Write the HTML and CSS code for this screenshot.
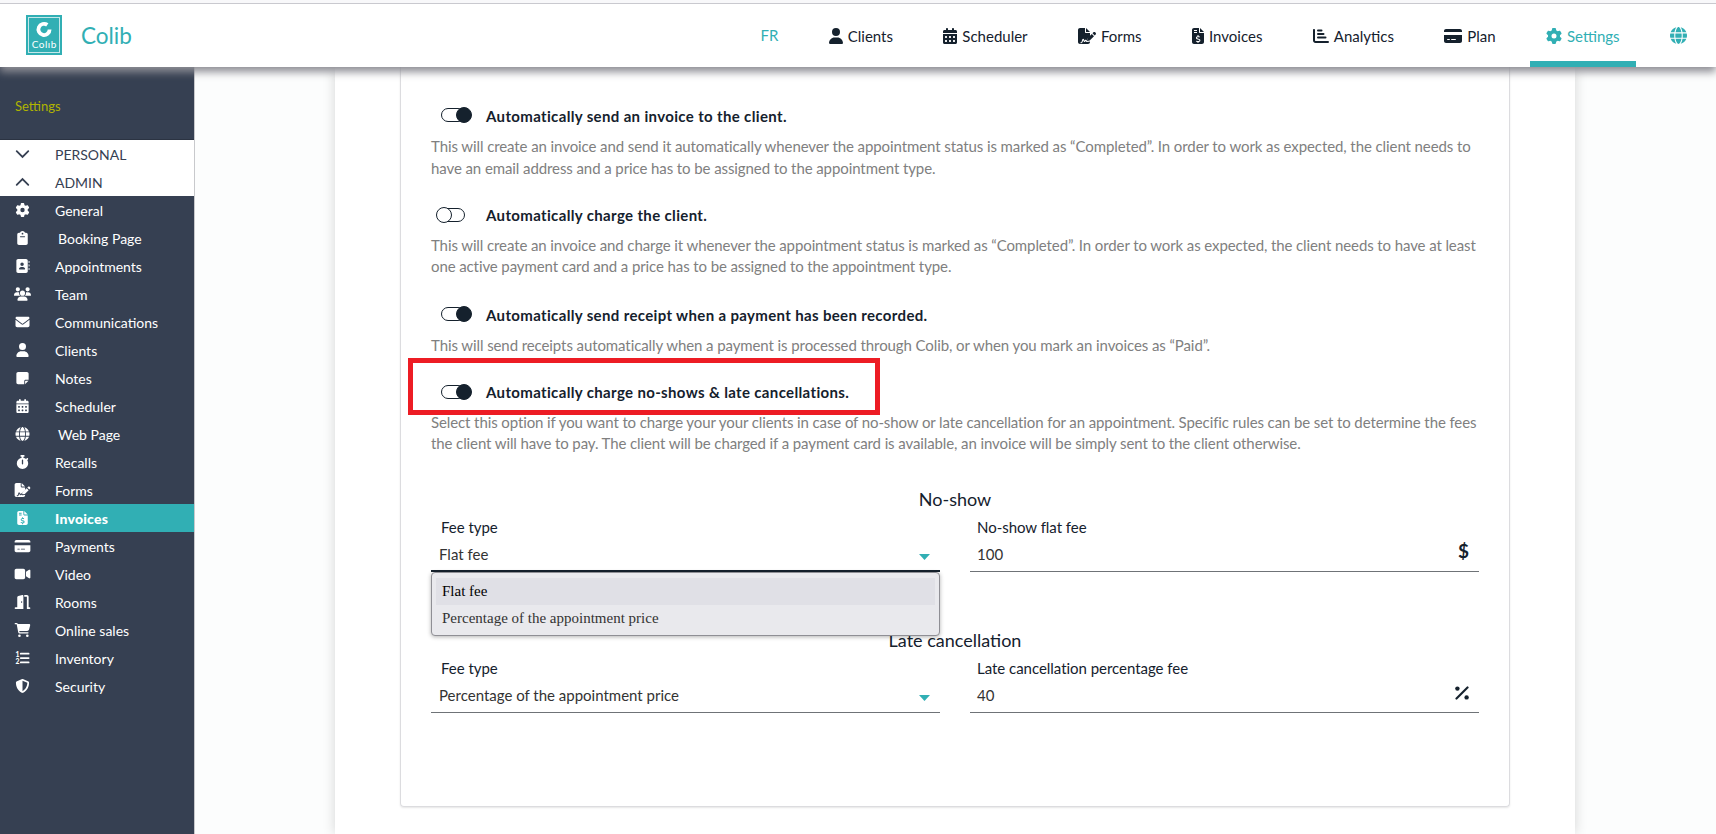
FILE: index.html
```html
<!DOCTYPE html>
<html lang="en">
  <head>
    <meta charset="UTF-8" />
    <meta name="viewport" content="width=device-width, initial-scale=1.0" />
    <title>Colib - Invoice settings</title>
    <link rel="stylesheet" href="styles.css">
  </head>
  <body>
    <!-- Icon sprite -->
    <svg class="sprite" xmlns="http://www.w3.org/2000/svg">
      <symbol id="i-user" viewBox="0 0 448 512"><path d="M224 256A128 128 0 1 0 224 0a128 128 0 1 0 0 256zm-45.7 48C79.8 304 0 383.8 0 482.3C0 498.7 13.3 512 29.7 512H418.3c16.4 0 29.7-13.3 29.7-29.7C448 383.8 368.2 304 269.7 304H178.3z"/></symbol>
      <symbol id="i-gear" viewBox="0 0 512 512"><path d="M495.9 166.6c3.2 8.7 .5 18.4-6.4 24.6l-43.3 39.4c1.1 8.3 1.7 16.8 1.7 25.4s-.6 17.1-1.7 25.4l43.3 39.4c6.9 6.2 9.6 15.9 6.4 24.6c-4.4 11.9-9.7 23.3-15.8 34.3l-4.7 8.1c-6.6 11-14 21.4-22.1 31.2c-5.9 7.2-15.7 9.6-24.5 6.8l-55.7-17.7c-13.4 10.3-28.2 18.9-44 25.4l-12.5 57.1c-2 9.1-9 16.3-18.2 17.8c-13.8 2.3-28 3.5-42.5 3.5s-28.7-1.2-42.5-3.5c-9.2-1.5-16.2-8.7-18.2-17.8l-12.5-57.1c-15.8-6.5-30.6-15.1-44-25.4L83.1 425.9c-8.8 2.8-18.6 .3-24.5-6.8c-8.1-9.8-15.5-20.2-22.1-31.2l-4.7-8.1c-6.1-11-11.4-22.4-15.8-34.3c-3.2-8.7-.5-18.4 6.4-24.6l43.3-39.4C64.6 273.1 64 264.6 64 256s.6-17.1 1.7-25.4L22.4 191.2c-6.9-6.2-9.6-15.9-6.4-24.6c4.4-11.9 9.7-23.3 15.8-34.3l4.7-8.1c6.6-11 14-21.4 22.1-31.2c5.9-7.2 15.7-9.6 24.5-6.8l55.7 17.7c13.4-10.3 28.2-18.9 44-25.4l12.5-57.1c2-9.1 9-16.3 18.2-17.8C227.3 1.2 241.5 0 256 0s28.7 1.2 42.5 3.5c9.2 1.5 16.2 8.7 18.2 17.8l12.5 57.1c15.8 6.5 30.6 15.1 44 25.4l55.7-17.7c8.8-2.8 18.6-.3 24.5 6.8c8.1 9.8 15.5 20.2 22.1 31.2l4.7 8.1c6.1 11 11.4 22.4 15.8 34.3zM256 336a80 80 0 1 0 0-160 80 80 0 1 0 0 160z"/></symbol>
      <symbol id="i-calendar" viewBox="0 0 448 512"><path d="M128 0c17.7 0 32 14.3 32 32V64H288V32c0-17.7 14.3-32 32-32s32 14.3 32 32V64h48c26.5 0 48 21.5 48 48v48H0V112C0 85.5 21.5 64 48 64H96V32c0-17.7 14.3-32 32-32zM0 192H448V464c0 26.5-21.5 48-48 48H48c-26.5 0-48-21.5-48-48V192zm64 80v32c0 8.8 7.2 16 16 16h32c8.8 0 16-7.2 16-16V272c0-8.8-7.2-16-16-16H80c-8.8 0-16 7.2-16 16zm128 0v32c0 8.8 7.2 16 16 16h32c8.8 0 16-7.2 16-16V272c0-8.8-7.2-16-16-16H208c-8.8 0-16 7.2-16 16zm144-16c-8.8 0-16 7.2-16 16v32c0 8.8 7.2 16 16 16h32c8.8 0 16-7.2 16-16V272c0-8.8-7.2-16-16-16H336zM64 400v32c0 8.8 7.2 16 16 16h32c8.8 0 16-7.2 16-16V400c0-8.8-7.2-16-16-16H80c-8.8 0-16 7.2-16 16zm144-16c-8.8 0-16 7.2-16 16v32c0 8.8 7.2 16 16 16h32c8.8 0 16-7.2 16-16V400c0-8.8-7.2-16-16-16H208zm112 16v32c0 8.8 7.2 16 16 16h32c8.8 0 16-7.2 16-16V400c0-8.8-7.2-16-16-16H336c-8.8 0-16 7.2-16 16z"/></symbol>
      <symbol id="i-globe" viewBox="0 0 512 512"><path d="M352 256c0 22.2-1.2 43.6-3.3 64H163.3c-2.2-20.4-3.3-41.8-3.3-64s1.2-43.6 3.3-64H348.7c2.2 20.4 3.3 41.8 3.3 64zm28.8-64H503.9c5.3 20.5 8.1 41.9 8.1 64s-2.8 43.5-8.1 64H380.8c2.1-20.6 3.2-42 3.2-64s-1.1-43.4-3.2-64zm112.6-32H376.7c-10-63.9-29.8-117.4-55.3-151.6c78.3 20.7 142 77.5 171.9 151.6zm-149.1 0H167.7c6.1-36.4 15.5-68.6 27-94.7c10.5-23.6 22.2-40.7 33.5-51.5C239.4 3.2 248.7 0 256 0s16.6 3.2 27.8 13.8c11.3 10.8 23 27.9 33.5 51.5c11.6 26 20.9 58.2 27 94.7zm-209 0H18.6C48.6 85.9 112.2 29.1 190.6 8.4C165.1 42.6 145.3 96.1 135.3 160zM8.1 192H131.2c-2.1 20.6-3.2 42-3.2 64s1.1 43.4 3.2 64H8.1C2.8 299.5 0 278.1 0 256s2.8-43.5 8.1-64zM194.7 446.6c-11.6-26-20.9-58.2-27-94.6H344.3c-6.1 36.4-15.5 68.6-27 94.6c-10.5 23.6-22.2 40.7-33.5 51.5C272.6 508.8 263.3 512 256 512s-16.6-3.2-27.8-13.8c-11.3-10.8-23-27.9-33.5-51.5zM135.3 352c10 63.9 29.8 117.4 55.3 151.6C112.2 482.9 48.6 426.1 18.6 352H135.3zm358.1 0c-30 74.1-93.6 130.9-171.9 151.6c25.5-34.2 45.2-87.7 55.3-151.6H493.4z"/></symbol>
      <symbol id="i-video" viewBox="0 0 576 512"><path d="M0 128C0 92.7 28.7 64 64 64H320c35.3 0 64 28.7 64 64V384c0 35.3-28.7 64-64 64H64c-35.3 0-64-28.7-64-64V128zM559.1 99.8c10.4 5.6 16.9 16.4 16.9 28.2V384c0 11.8-6.5 22.6-16.9 28.2s-23 5-32.9-1.6l-96-64L416 337.1V320 192 174.9l14.2-9.5 96-64c9.8-6.5 22.4-7.2 32.9-1.6z"/></symbol>
      <symbol id="i-envelope" viewBox="0 0 512 512"><path d="M48 64C21.5 64 0 85.5 0 112c0 15.1 7.1 29.3 19.2 38.4L236.8 313.6c11.4 8.5 27 8.5 38.4 0L492.8 150.4c12.1-9.1 19.2-23.3 19.2-38.4c0-26.5-21.5-48-48-48H48zM0 176V384c0 35.3 28.7 64 64 64H448c35.3 0 64-28.7 64-64V176L294.4 339.2c-22.8 17.1-54 17.1-76.8 0L0 176z"/></symbol>
      <symbol id="i-note" viewBox="0 0 448 512"><path d="M64 32C28.7 32 0 60.7 0 96V416c0 35.3 28.7 64 64 64H288V368c0-26.5 21.5-48 48-48H448V96c0-35.3-28.7-64-64-64H64zM448 352H402.7 336c-8.8 0-16 7.2-16 16v66.7V480l32-32 64-64 32-32z"/></symbol>
      <symbol id="i-cart" viewBox="0 0 576 512"><path d="M0 24C0 10.7 10.7 0 24 0H69.5c22 0 41.5 12.8 50.6 32h411c26.3 0 45.5 25 38.6 50.4l-41 152.3c-8.5 31.4-37 53.3-69.5 53.3H170.7l5.4 28.5c2.2 11.3 12.1 19.5 23.6 19.5H488c13.3 0 24 10.7 24 24s-10.7 24-24 24H199.7c-34.6 0-64.3-24.6-70.7-58.5L77.4 54.5c-.7-3.8-4-6.5-7.9-6.5H24C10.7 48 0 37.3 0 24zM128 464a48 48 0 1 1 96 0 48 48 0 1 1 -96 0zm336-48a48 48 0 1 1 0 96 48 48 0 1 1 0-96z"/></symbol>
      <symbol id="i-shield" viewBox="0 0 512 512"><path d="M256 0c4.6 0 9.2 1 13.4 2.9L457.7 82.8c22 9.3 38.4 31 38.3 57.2c-.5 99.2-41.3 280.7-213.6 363.2c-16.7 8-36.1 8-52.8 0C57.3 420.7 16.5 239.2 16 140c-.1-26.2 16.3-47.9 38.3-57.2L242.7 2.9C246.8 1 251.4 0 256 0zm0 66.8V444.8C394 378 431.1 230.1 432 141.4L256 66.8z"/></symbol>
      <symbol id="i-stopwatch" viewBox="0 0 448 512"><path d="M176 0c-17.7 0-32 14.3-32 32s14.3 32 32 32h16V98.4C92.3 113.8 16 200 16 304c0 114.9 93.1 208 208 208s208-93.1 208-208c0-41.8-12.3-80.7-33.5-113.2l24.1-24.1c12.5-12.5 12.5-32.8 0-45.3s-32.8-12.5-45.3 0L355.7 143c-28.1-23-62.2-38.8-99.7-44.6V64h16c17.7 0 32-14.3 32-32s-14.3-32-32-32H224 176zm72 192V320c0 13.3-10.7 24-24 24s-24-10.7-24-24V192c0-13.3 10.7-24 24-24s24 10.7 24 24z"/></symbol>
      <symbol id="i-card" viewBox="0 0 576 512"><path d="M64 32C28.7 32 0 60.7 0 96v32H576V96c0-35.3-28.7-64-64-64H64zM576 224H0V416c0 35.3 28.7 64 64 64H512c35.3 0 64-28.7 64-64V224zM112 352h64c8.8 0 16 7.2 16 16s-7.2 16-16 16H112c-8.8 0-16-7.2-16-16s7.2-16 16-16zm112 16c0-8.8 7.2-16 16-16H368c8.8 0 16 7.2 16 16s-7.2 16-16 16H240c-8.8 0-16-7.2-16-16z"/></symbol>
      <symbol id="i-clipboard" viewBox="0 0 384 512"><path fill-rule="evenodd" d="M192 0c-41.800 0-77.400 26.700-90.500 64H64C28.700 64 0 92.700 0 128V448c0 35.300 28.700 64 64 64H320c35.300 0 64-28.700 64-64V128c0-35.300-28.700-64-64-64H282.500C269.400 26.700 233.800 0 192 0zm0 64a32 32 0 1 1 0 64 32 32 0 1 1 0-64zM112 192H272a16 16 0 0 1 0 32H112a16 16 0 0 1 0-32z"/></symbol>
      <symbol id="i-address" viewBox="0 0 512 512"><path fill-rule="evenodd" d="M96 0C60.700 0 32 28.700 32 64V448c0 35.300 28.700 64 64 64H384c35.300 0 64-28.700 64-64V64c0-35.300-28.700-64-64-64H96zM240 128a64 64 0 1 1 0 128 64 64 0 1 1 0-128zM208 288h64c44 0 80 36 80 80c0 9-7 16-16 16H144c-9 0-16-7-16-16c0-44 36-80 80-80zM480 64c18 0 32 6 32 20v40c0 14-14 20-32 20zM480 192c18 0 32 6 32 20v40c0 14-14 20-32 20zM480 320c18 0 32 6 32 20v40c0 14-14 20-32 20z"/></symbol>
      <symbol id="i-users" viewBox="0 0 640 512"><path d="M144 0a80 80 0 1 1 0 160A80 80 0 1 1 144 0zM512 0a80 80 0 1 1 0 160A80 80 0 1 1 512 0zM0 298.700C0 239.800 47.800 192 106.700 192h42.700c15.900 0 31 3.500 44.600 9.700c-1.300 7.200-1.900 14.700-1.900 22.300c0 38.200 16.800 72.500 43.300 96H21.300C9.600 320 0 310.400 0 298.700zM405.300 320c26.600-23.500 43.300-57.800 43.300-96c0-7.600-.7-15-1.900-22.300c13.600-6.300 28.700-9.700 44.600-9.700h42.700C592.200 192 640 239.800 640 298.700c0 11.800-9.600 21.300-21.300 21.300H405.300zM224 224a96 96 0 1 1 192 0 96 96 0 1 1 -192 0zM128 485.300C128 411.700 187.700 352 261.300 352H378.700C452.300 352 512 411.700 512 485.300c0 14.700-11.900 26.700-26.700 26.700H154.700c-14.700 0-26.700-11.900-26.700-26.700z"/></symbol>
      <!-- signed document with a pen -->
      <symbol id="i-sign" viewBox="0 0 576 512"><path fill-rule="evenodd" d="M64 0C28.700 0 0 28.700 0 64V448c0 35.300 28.700 64 64 64H320c35.300 0 64-28.700 64-64v-19l-32 8-72 11c-22 0-34-15-40-30l-22 28c-8 8-24 8-29-4l-21-54-25 71c-6 17-18 25-36 25H80v-32h22c5 0 9-3 10-8l28-83c10-24 42-24 51 0l18 46 16-20c12-15 35-12 43 5l9 18 21-78 86-82V160H256c-18 0-32-14-32-32V0H64zM256 0V128H384zM549.800 139.700c-15.600-15.600-40.900-15.600-56.600 0l-29.400 29.400 71 71 29.400-29.400c15.600-15.600 15.600-40.900 0-56.600zM311.900 321c-4 4-7 9-8.400 15l-15 60c-1.400 5.500 .2 11.200 4.200 15.200s9.700 5.600 15.200 4.200l60-15c5.600-1.400 10.800-4.300 14.900-8.400L512 262.600l-71-71z"/></symbol>
      <symbol id="i-invoice" viewBox="0 0 384 512"><path fill-rule="evenodd" d="M64 0C28.700 0 0 28.700 0 64V448c0 35.300 28.700 64 64 64H320c35.300 0 64-28.700 64-64V160H256c-17.700 0-32-14.300-32-32V0H64zM256 0V128H384zM64 64h96v32H64zM64 128h96v32H64zM176 224h32v36c18 1 33 5 43 9l-11 31c-28-9-79-13-81 12c-1 17 20 21 49 28c33 8 62 22 60 60c-2 31-27 46-60 50v30h-32v-30c-20-2-40-8-54-16l13-30c28 14 97 25 100-2c2-19-22-23-51-31c-34-9-60-24-58-58c2-29 22-46 50-52z"/></symbol>
      <symbol id="i-door" viewBox="0 0 576 512"><path fill-rule="evenodd" d="M320 32c0-10-4.500-19-12-25c-8-6-18-8-28-6l-144 36C115 42 96 64 96 90V448H32c-18 0-32 14-32 32s14 32 32 32H320zM256 224c13 0 24 14 24 32s-11 32-24 32-24-14-24-32 11-32 24-32zM352 64h96v384 64h96c18 0 32-14 32-32s-14-32-32-32h-32V64c0-35-29-64-64-64h-96z"/></symbol>
      <symbol id="i-list" viewBox="0 0 512 512">
        <path d="M192 64h288a32 32 0 0 1 0 64H192a32 32 0 0 1 0-64zM192 224h288a32 32 0 0 1 0 64H192a32 32 0 0 1 0-64zM192 384h288a32 32 0 0 1 0 64H192a32 32 0 0 1 0-64z"/>
        <text class="digit" x="0" y="220">1</text>
        <text class="digit" x="0" y="490">2</text>
      </symbol>
      <symbol id="i-chart" viewBox="0 0 512 512"><path d="M32 32c17.700 0 32 14.300 32 32V400c0 8.800 7.200 16 16 16H480a32 32 0 0 1 0 64H80c-44.200 0-80-35.800-80-80V64C0 46.300 14.300 32 32 32zM160 48H272a32 32 0 0 1 0 64H160a32 32 0 0 1 0-64zM160 160H336a32 32 0 0 1 0 64H160a32 32 0 0 1 0-64zM160 272H400a32 32 0 0 1 0 64H160a32 32 0 0 1 0-64z"/></symbol>
      <symbol id="i-down" viewBox="0 0 14 14"><path class="line" d="M1.200 4.200 7 10l5.800-5.800"/></symbol>
      <symbol id="i-up" viewBox="0 0 14 14"><path class="line" d="M1.200 9.800 7 4l5.800 5.800"/></symbol>
      <symbol id="i-percent" viewBox="0 0 14 14"><circle cx="2.400" cy="2.600" r="2.200"/><circle cx="11.600" cy="11.400" r="2.200"/><path class="line thick" d="M1.500 12.500l11-11"/></symbol>
    </svg>

    <header class="topbar">
      <a class="brand" href="#">
        <svg class="logo" viewBox="0 0 36 40">
          <rect width="36" height="40" fill="#31afb4"/>
          <rect class="logo-frame" x="2.500" y="2.500" width="31" height="35"/>
          <path class="logo-ring" d="M21.300 9.900A5.600 5.600 0 1 0 23.600 14.400"/>
          <text class="logo-text" x="18.200" y="32.800">Colıb</text>
        </svg>
        <span class="brand-name">Colib</span>
      </a>
      <nav class="nav">
        <a class="nav-item lang" href="#">FR</a>
        <a class="nav-item" href="#"><svg class="w14"><use href="#i-user"/></svg>Clients</a>
        <a class="nav-item" href="#"><svg class="w14"><use href="#i-calendar"/></svg>Scheduler</a>
        <a class="nav-item" href="#"><svg class="w18"><use href="#i-sign"/></svg>Forms</a>
        <a class="nav-item" href="#"><svg class="w12"><use href="#i-invoice"/></svg>Invoices</a>
        <a class="nav-item" href="#"><svg class="w16"><use href="#i-chart"/></svg>Analytics</a>
        <a class="nav-item" href="#"><svg class="w18"><use href="#i-card"/></svg>Plan</a>
        <a class="nav-item active" href="#"><svg class="w16"><use href="#i-gear"/></svg>Settings</a>
        <a class="nav-item world" href="#"><svg><use href="#i-globe"/></svg></a>
      </nav>
    </header>

    <div class="layout">
      <aside class="sidebar">
        <div class="sidebar-title">Settings</div>
        <a class="side-item group" href="#"><svg><use href="#i-down"/></svg>PERSONAL</a>
        <a class="side-item group" href="#"><svg><use href="#i-up"/></svg>ADMIN</a>
        <a class="side-item" href="#"><svg><use href="#i-gear"/></svg>General</a>
        <a class="side-item indent" href="#"><svg><use href="#i-clipboard"/></svg>Booking Page</a>
        <a class="side-item" href="#"><svg><use href="#i-address"/></svg>Appointments</a>
        <a class="side-item" href="#"><svg><use href="#i-users"/></svg>Team</a>
        <a class="side-item" href="#"><svg><use href="#i-envelope"/></svg>Communications</a>
        <a class="side-item" href="#"><svg><use href="#i-user"/></svg>Clients</a>
        <a class="side-item" href="#"><svg><use href="#i-note"/></svg>Notes</a>
        <a class="side-item" href="#"><svg><use href="#i-calendar"/></svg>Scheduler</a>
        <a class="side-item indent" href="#"><svg><use href="#i-globe"/></svg>Web Page</a>
        <a class="side-item" href="#"><svg><use href="#i-stopwatch"/></svg>Recalls</a>
        <a class="side-item" href="#"><svg><use href="#i-sign"/></svg>Forms</a>
        <a class="side-item current" href="#"><svg><use href="#i-invoice"/></svg>Invoices</a>
        <a class="side-item" href="#"><svg><use href="#i-card"/></svg>Payments</a>
        <a class="side-item" href="#"><svg><use href="#i-video"/></svg>Video</a>
        <a class="side-item" href="#"><svg><use href="#i-door"/></svg>Rooms</a>
        <a class="side-item" href="#"><svg><use href="#i-cart"/></svg>Online sales</a>
        <a class="side-item" href="#"><svg><use href="#i-list"/></svg>Inventory</a>
        <a class="side-item" href="#"><svg><use href="#i-shield"/></svg>Security</a>
      </aside>

      <main class="content">
        <div class="panel">
          <section class="card">
            <div class="option">
              <div class="option-head"><span class="toggle on"></span><b>Automatically send an invoice to the client.</b></div>
              <p>This will create an invoice and send it automatically whenever the appointment status is marked as “Completed”. In order to work as expected, the client needs to<br>have an email address and a price has to be assigned to the appointment type.</p>
            </div>
            <div class="option">
              <div class="option-head"><span class="toggle"></span><b>Automatically charge the client.</b></div>
              <p>This will create an invoice and charge it whenever the appointment status is marked as “Completed”. In order to work as expected, the client needs to have at least<br>one active payment card and a price has to be assigned to the appointment type.</p>
            </div>
            <div class="option">
              <div class="option-head"><span class="toggle on"></span><b>Automatically send receipt when a payment has been recorded.</b></div>
              <p>This will send receipts automatically when a payment is processed through Colib, or when you mark an invoices as “Paid”.</p>
            </div>
            <div class="option highlighted">
              <div class="option-head"><span class="toggle on"></span><b>Automatically charge no-shows &amp; late cancellations.</b></div>
              <p>Select this option if you want to charge your your clients in case of no-show or late cancellation for an appointment. Specific rules can be set to determine the fees<br>the client will have to pay. The client will be charged if a payment card is available, an invoice will be simply sent to the client otherwise.</p>
            </div>

            <h2>No-show</h2>
            <div class="fees">
              <div class="field select focused">
                <label>Fee type</label>
                <div class="value">Flat fee<span class="caret"></span></div>
                <ul class="menu">
                  <li class="selected">Flat fee</li>
                  <li>Percentage of the appointment price</li>
                </ul>
              </div>
              <div class="field">
                <label>No-show flat fee</label>
                <div class="value">100<span class="unit">$</span></div>
              </div>
            </div>

            <h2>Late cancellation</h2>
            <div class="fees">
              <div class="field select">
                <label>Fee type</label>
                <div class="value">Percentage of the appointment price<span class="caret"></span></div>
              </div>
              <div class="field">
                <label>Late cancellation percentage fee</label>
                <div class="value">40<svg class="percent"><use href="#i-percent"/></svg></div>
              </div>
            </div>
          </section>
        </div>
      </main>
    </div>
  </body>
</html>
```
FILE: styles.css
```css
*,
*::before,
*::after {
  box-sizing: border-box;
}

:root {
  --accent: #31afb4;
  --ink: #15212d;
  --slate: #364052;
}

body {
  margin: 0;
  height: 834px;
  overflow: hidden;
  display: flex;
  flex-direction: column;
  font-family: Lato, sans-serif;
  font-size: 15px;
  color: var(--ink);
  background: #fcfdfd;
}

a {
  color: inherit;
  text-decoration: none;
}

svg {
  fill: currentColor;
}

.sprite {
  display: none;
}

.line {
  fill: none;
  stroke: currentColor;
  stroke-width: 1.8;
  stroke-linecap: round;
}

.thick {
  stroke-width: 2.2;
}

.digit {
  font: 900 250px Lato, sans-serif;
}

/* Top bar */
.topbar {
  position: relative;
  z-index: 2;
  flex: none;
  display: flex;
  justify-content: space-between;
  height: 67px;
  padding: 0 29px 0 26px;
  background: #fff;
  border-top: 3px solid #f8f8fa;
  box-shadow: 0 5px 8px #8e8e95;
}

.topbar::before {
  content: "";
  position: absolute;
  top: 0;
  left: 0;
  right: 0;
  height: 1px;
  background: #c9c9cf;
}

.brand {
  display: flex;
  align-items: flex-start;
  gap: 19px;
  padding-top: 12px;
  color: var(--accent);
}

.logo {
  width: 36px;
  height: 40px;
}

.logo-frame {
  fill: none;
  stroke: #c5e8ea;
}

.logo-ring {
  fill: none;
  stroke: #fff;
  stroke-width: 3.8;
}

.logo-text {
  font-size: 10px;
  letter-spacing: 0.5px;
  text-anchor: middle;
  fill: #fff;
}

.brand-name {
  font-size: 22.5px;
  line-height: 42px;
}

.nav {
  display: flex;
  gap: 18.4px;
}

.nav-item {
  display: flex;
  align-items: center;
  gap: 5px;
  padding: 7px 16px 0;
  border-bottom: 6px solid transparent;
}

.nav-item svg {
  height: 16px;
}

.w12 { width: 12px; }
.w14 { width: 14px; }
.w16 { width: 16px; }
.w18 { width: 18px; }

.nav-item.active {
  color: var(--accent);
  border-bottom-color: var(--accent);
}

.nav-item.lang {
  padding-top: 5px;
  color: var(--accent);
}

.nav-item.world {
  padding-right: 0;
  color: var(--accent);
}

.nav-item.world svg {
  width: 17px;
  height: 17px;
}

.layout {
  flex: 1;
  display: flex;
  min-height: 0;
}

/* Sidebar */
.sidebar {
  flex: none;
  width: 195px;
  background: var(--slate);
  border-right: 1px solid #c8c9cc;
  color: #fff;
}

.sidebar-title {
  height: 73px;
  padding: 30px 15px 0;
  border-bottom: 1px solid #2b3342;
  font-size: 13px;
  line-height: 18px;
  color: #b0b400;
}

.side-item {
  display: flex;
  align-items: center;
  height: 28px;
  padding-left: 14px;
  font-size: 14px;
}

.side-item svg {
  width: 17px;
  height: 14px;
  margin-right: 24px;
}

.side-item.indent svg {
  margin-right: 27px;
}

.side-item.group {
  background: #fff;
  color: var(--slate);
}

.side-item.current {
  background: var(--accent);
  font-weight: 900;
  letter-spacing: 0.25px;
}

/* Content */
.content {
  flex: 1;
  min-width: 0;
  padding: 0 141px 0 140px;
}

.panel {
  height: 100%;
  padding: 0 65px;
  background: #fff;
  box-shadow: 0 0 12px rgba(0, 0, 0, 0.16);
}

.card {
  height: 740px;
  padding: 35px 30px 0;
  border: 1px solid #dcdcdf;
  border-top: 0;
  border-radius: 0 0 4px 4px;
  box-shadow: 0 1px 2px rgba(0, 0, 0, 0.1);
}

.option {
  height: 99px;
}

.option-head {
  display: flex;
  align-items: center;
  height: 28px;
  padding-left: 10px;
  letter-spacing: 0.35px;
}

.option p {
  margin: 5px 0 0;
  line-height: 22px;
  letter-spacing: -0.09px;
  color: #808080;
  white-space: nowrap;
}

.option:nth-child(even) {
  height: 100px;
}

.option:nth-child(even) p {
  margin-top: 6px;
  line-height: 21px;
  letter-spacing: -0.105px;
}

.option:nth-child(even) .toggle {
  margin-top: -1px;
}

.option:nth-child(3) {
  height: 77px;
}

.toggle {
  position: relative;
  width: 24px;
  height: 14px;
  margin: -3px 21px 0 0;
  border: 1px solid var(--ink);
  border-radius: 7px;
}

.toggle::after {
  content: "";
  position: absolute;
  top: -2px;
  left: -6px;
  width: 16px;
  height: 16px;
  border: 1px solid var(--ink);
  border-radius: 50%;
  background: #fff;
}

.toggle.on::after {
  left: 14px;
  background: var(--ink);
}

.option.highlighted {
  position: relative;
  height: 109px;
}

.highlighted::before {
  content: "";
  position: absolute;
  top: -20px;
  left: -23px;
  width: 472px;
  height: 57px;
  border: 5px solid #ed1c24;
}

h2 {
  margin: 0;
  font-size: 18px;
  font-weight: 400;
  line-height: 24px;
  text-align: center;
}

.fees {
  display: grid;
  grid-template-columns: 1fr 1fr;
  gap: 30px;
  height: 117px;
}

.field {
  position: relative;
}

.field label {
  display: block;
  padding: 6px 0 0 7px;
  line-height: 20px;
  letter-spacing: -0.03px;
}

.field.select label {
  padding-left: 10px;
}

.value {
  display: flex;
  justify-content: space-between;
  height: 35px;
  padding: 6px 10px 0 7px;
  border-bottom: 1px solid #6f7377;
  line-height: 22px;
  color: #333;
}

.select .value {
  padding-left: 8px;
}

.focused .value {
  border-bottom: 2px solid var(--ink);
}

.caret {
  margin-top: 11px;
  width: 11px;
  height: 6px;
  background: var(--accent);
  clip-path: polygon(0 0, 100% 0, 50% 100%);
}

.unit {
  margin-top: -3px;
  font-size: 19px;
  font-weight: 700;
  color: var(--ink);
}

.percent {
  width: 14px;
  height: 14px;
  margin-top: 2px;
  color: var(--ink);
}

/* Opened fee type list */
.menu {
  position: absolute;
  top: 61px;
  left: 0;
  width: 100%;
  height: 64px;
  margin: 0;
  padding: 5px 4px 4px;
  list-style: none;
  font: 15px/27px "Liberation Serif", serif;
  color: #333;
  background: #e9e9ed;
  border: 1px solid #8f8f95;
  border-radius: 4px;
  box-shadow: 0 1px 4px rgba(0, 0, 0, 0.3);
}

.menu li {
  height: 27px;
  padding-left: 6px;
}

.menu .selected {
  color: #000;
  background: #e0e0e6;
}
```
